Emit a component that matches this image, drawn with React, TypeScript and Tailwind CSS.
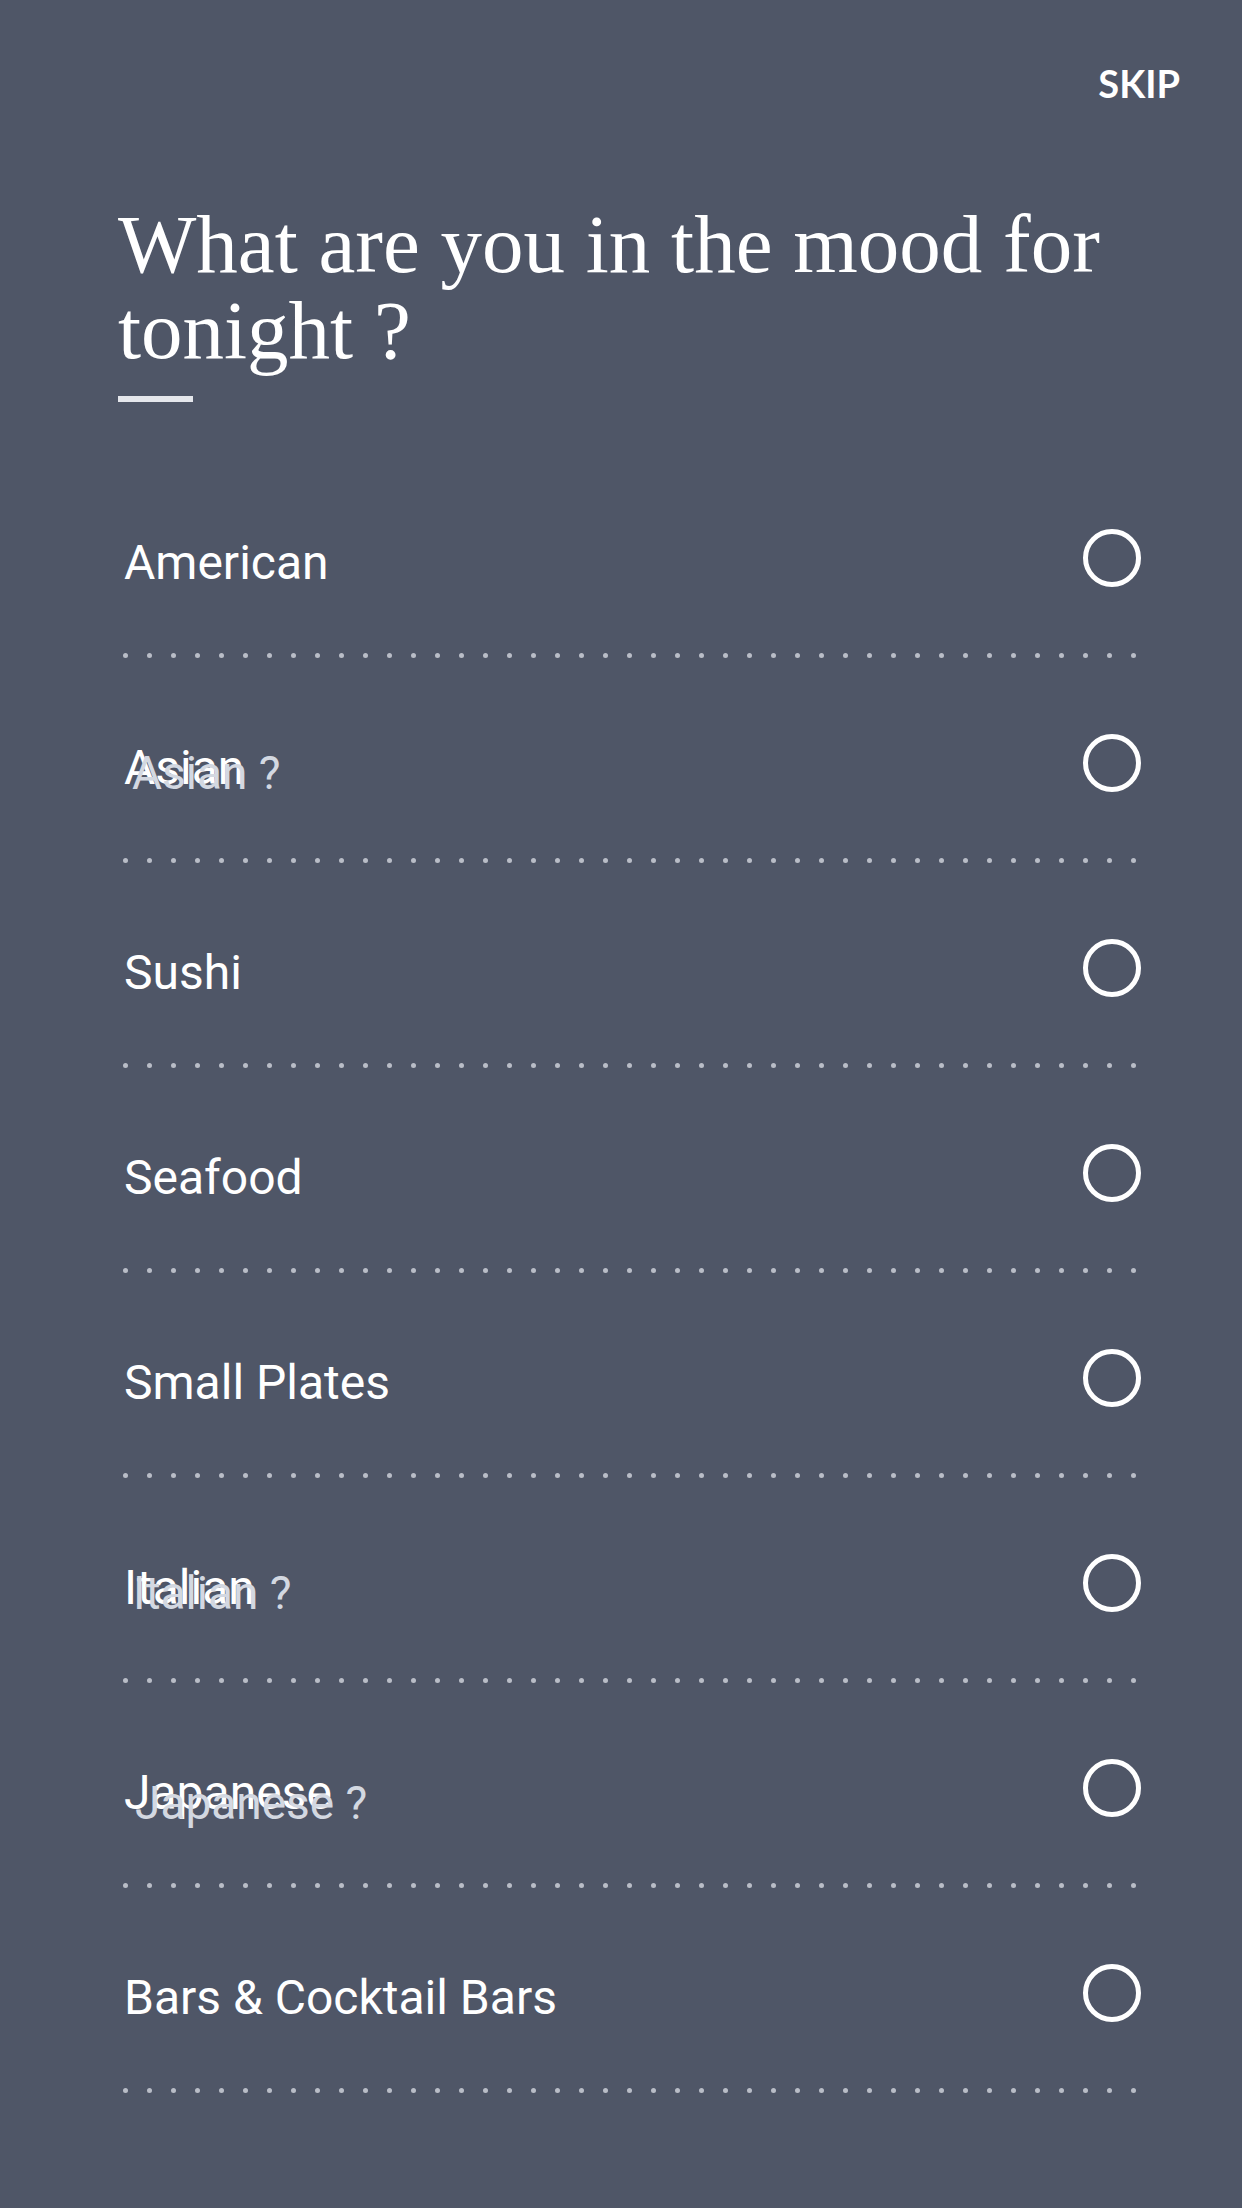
import React, { useState } from 'react';

type Cuisine = {
  id: string;
  label: string;
  // faded "question" copy drawn over some labels
  ghost?: string;
  ghostPos?: string;
};

const cuisines: Cuisine[] = [
  { id: 'american', label: 'American' },
  { id: 'asian', label: 'Asian', ghost: 'Asian ?', ghostPos: 'left-[9px] top-[5px]' },
  { id: 'sushi', label: 'Sushi' },
  { id: 'seafood', label: 'Seafood' },
  { id: 'small-plates', label: 'Small Plates' },
  { id: 'italian', label: 'Italian', ghost: 'Italian ?', ghostPos: 'left-[10px] top-[5px]' },
  { id: 'japanese', label: 'Japanese', ghost: 'Japanese ?', ghostPos: 'left-[12px] top-[10px]' },
  { id: 'bars', label: 'Bars & Cocktail Bars' },
];

const DottedRule: React.FC = () => (
  <div className="flex w-[1013px] justify-between">
    {Array.from({ length: 43 }).map((_, i) => (
      <span key={i} className="block h-[5px] w-[5px] rounded-full bg-[#b9bdc7]" />
    ))}
  </div>
);

const CuisineRow: React.FC<{ item: Cuisine; checked: boolean; onToggle: () => void }> = ({
  item,
  checked,
  onToggle,
}) => (
  <div className="pt-[76px]">
    <button
      onClick={onToggle}
      className="flex h-[58px] w-full cursor-pointer items-center justify-between text-left"
    >
      <span className="relative pl-[1px] pt-[9px] text-[48px] leading-[56px] text-white [font-family:Roboto,'Liberation_Sans',sans-serif]">
        {item.label}
        {item.ghost && (
          <span
            className={`pointer-events-none absolute whitespace-nowrap pt-[9px] text-[46px] leading-[56px] text-[#d3d8e1] ${item.ghostPos}`}
          >
            {item.ghost}
          </span>
        )}
      </span>
      <span
        className={`block h-[58px] w-[58px] shrink-0 rounded-full border-[5px] border-white ${
          checked ? 'bg-white' : 'bg-transparent'
        }`}
      />
    </button>
    <div className="pt-[66px]">
      <DottedRule />
    </div>
  </div>
);

export default function App() {
  const [selected, setSelected] = useState<string[]>([]);

  const toggle = (id: string) =>
    setSelected((prev) => (prev.includes(id) ? prev.filter((x) => x !== id) : [...prev, id]));

  return (
    <div className="min-h-[2208px] w-[1242px] bg-[#4f5667] pb-[110px]">
      {/* Top bar */}
      <div className="flex justify-end pr-[62px] pt-[64px]">
        <button className="cursor-pointer text-[38px] font-bold leading-[38px] text-white [font-family:Lato,'Liberation_Sans',sans-serif]">
          SKIP
        </button>
      </div>

      {/* Question */}
      <div className="pl-[118px] pr-[62px] pt-[99px]">
        <h1 className="text-[83px] leading-[86px] font-normal text-white [font-family:'Liberation_Serif',serif]">
          What are you in the mood for tonight ?
        </h1>
        <div className="mt-[23px] h-[6px] w-[75px] bg-[#e5e7ec]" />
      </div>

      {/* Options */}
      <div className="mt-[51px] pl-[123px] pr-[101px]">
        {cuisines.map((c) => (
          <CuisineRow
            key={c.id}
            item={c}
            checked={selected.includes(c.id)}
            onToggle={() => toggle(c.id)}
          />
        ))}
      </div>
    </div>
  );
}
